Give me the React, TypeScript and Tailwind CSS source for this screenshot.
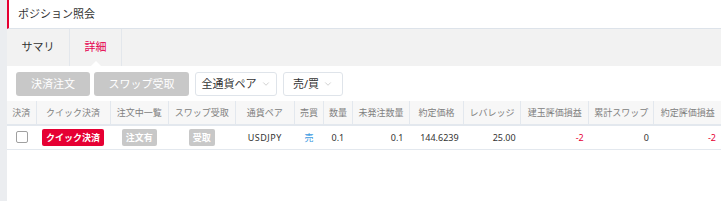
import { ChevronDown } from "lucide-react";

const cols = [
  { label: "決済", w: 29 },
  { label: "クイック決済", w: 74 },
  { label: "注文中一覧", w: 58 },
  { label: "スワップ受取", w: 67 },
  { label: "通貨ペア", w: 59 },
  { label: "売買", w: 29 },
  { label: "数量", w: 29 },
  { label: "未発注数量", w: 57 },
  { label: "約定価格", w: 54 },
  { label: "レバレッジ", w: 57 },
  { label: "建玉評価損益", w: 68 },
  { label: "累計スワップ", w: 65 },
  { label: "約定評価損益", w: 67 },
];

function Dropdown({ label, width }: { label: string; width: string }) {
  return (
    <button
      type="button"
      className={`flex h-[24px] ${width} items-center justify-center gap-[4px] rounded-[3px] border border-[#dfe4ea] bg-white text-[11px] text-[#333]`}
    >
      <span>{label}</span>
      <ChevronDown size={10} strokeWidth={1.5} className="text-[#b5b5b5]" />
    </button>
  );
}

export default function App() {
  return (
    <div
      className="flex h-[201px] w-[721px] bg-white"
      style={{ fontFamily: '"Noto Sans", "Noto Sans CJK JP", sans-serif' }}
    >
      <div className="w-[7px] shrink-0 bg-[#ebedf0]" />
      <div className="flex min-w-0 flex-1 flex-col">
        {/* タイトル */}
        <div className="flex h-[29px] items-center border-b border-[#dde3ea] border-l-[2px] border-l-[#e60033] pl-[9px] text-[11px] text-[#333]">
          ポジション照会
        </div>

        {/* タブ */}
        <div className="flex h-[37px] bg-[#f2f2f2]">
          <div className="flex w-[63px] items-center justify-center border-r border-[#e3e7ec] text-[11px] text-[#333]">
            サマリ
          </div>
          <div className="relative flex w-[52px] items-center justify-center border-r border-[#e3e7ec] text-[11px] text-[#e5004f]">
            詳細
            <span className="absolute bottom-0 left-1/2 h-0 w-0 -translate-x-1/2 border-x-[5px] border-b-[5px] border-x-transparent border-b-white" />
          </div>
        </div>

        {/* ツールバー */}
        <div className="flex h-[35px] items-center gap-[4px] pl-[9px] pt-[1px]">
          <button
            type="button"
            className="h-[24px] w-[74px] rounded-[3px] bg-[#c8c8c8] text-[11px] text-white"
          >
            決済注文
          </button>
          <button
            type="button"
            className="h-[24px] w-[95px] rounded-[3px] bg-[#c8c8c8] text-[11px] text-white"
          >
            スワップ受取
          </button>
          <div className="ml-[2px] flex gap-[6px]">
            <Dropdown label="全通貨ペア" width="w-[82px]" />
            <Dropdown label="売/買" width="w-[60px]" />
          </div>
        </div>

        {/* テーブル */}
        <table className="table-fixed border-collapse text-[9px]">
          <colgroup>
            {cols.map((c) => (
              <col key={c.label} style={{ width: c.w }} />
            ))}
          </colgroup>
          <thead>
            <tr className="h-[24px] border-b-2 border-[#e3e8ee] bg-[#f7f7f7] text-[#808080]">
              {cols.map((c) => (
                <th
                  key={c.label}
                  className="border-r border-[#e3e8ee] text-center font-normal whitespace-nowrap last:border-r-0"
                >
                  {c.label}
                </th>
              ))}
            </tr>
          </thead>
          <tbody>
            <tr className="h-[24px] border-b border-[#e3e8ee] text-[#333]">
              <td className="text-center">
                <span className="inline-block h-[12px] w-[12px] translate-y-[1px] rounded-[2px] border border-[#a0a0a0] bg-white" />
              </td>
              <td className="text-center">
                <span className="inline-flex h-[17px] w-[62px] items-center justify-center rounded-[2px] bg-[#e60033] font-bold text-white">
                  クイック決済
                </span>
              </td>
              <td className="text-center">
                <span className="inline-flex h-[17px] w-[35px] items-center justify-center rounded-[2px] bg-[#c8c8c8] font-bold text-white">
                  注文有
                </span>
              </td>
              <td className="text-center">
                <span className="inline-flex h-[17px] w-[26px] items-center justify-center rounded-[2px] bg-[#c8c8c8] font-bold text-white">
                  受取
                </span>
              </td>
              <td className="text-center tracking-[0.5px]">USDJPY</td>
              <td className="text-center text-[#3b9ae1]">売</td>
              <td className="text-center">0.1</td>
              <td className="pr-[6px] text-right">0.1</td>
              <td className="pr-[5px] text-right">144.6239</td>
              <td className="pr-[5px] text-right">25.00</td>
              <td className="pr-[5px] text-right text-[#e60033]">-2</td>
              <td className="pr-[5px] text-right">0</td>
              <td className="pr-[5px] text-right text-[#e60033]">-2</td>
            </tr>
          </tbody>
        </table>
      </div>
    </div>
  );
}
